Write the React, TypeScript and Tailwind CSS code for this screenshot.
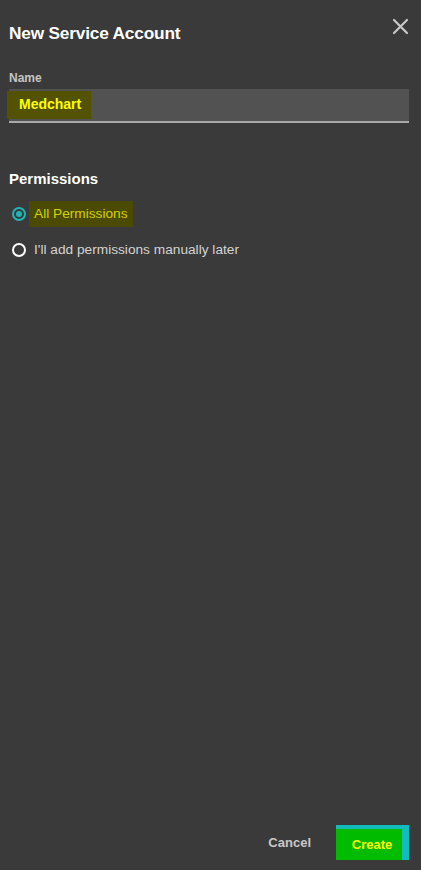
import React from 'react';

const App: React.FC = () => {
  return (
    <div className="w-[421px] h-[870px] bg-[#3a3a3a] flex flex-col font-['Liberation_Sans',Arial,sans-serif]">
      <div className="flex items-start justify-between pl-[9px] pr-[12px] pt-[21px]">
        <h1 className="text-[17.3px] font-bold text-white tracking-[-0.2px]">New Service Account</h1>
        <button className="mt-[-3px] text-[#c8c8c8]">
          <svg width="17" height="17" viewBox="0 0 17 17" fill="none" stroke="currentColor" strokeWidth="2.2" strokeLinecap="round">
            <path d="M2 2 L15 15 M15 2 L2 15" />
          </svg>
        </button>
      </div>

      <div className="pl-[9px] pr-[12px] mt-[25px]">
        <label className="block text-[12px] font-bold text-[#c4c4c4] leading-none">Name</label>
        <div className="mt-[5px] h-[34px] bg-[#525252] border-b-2 border-[#a8a8a8] flex items-center">
          <span className="ml-[-2px] h-[28px] pl-[12px] pr-[10px] flex items-center bg-[#525200] text-[#ffff00] text-[14px] font-bold">Medchart</span>
        </div>
      </div>

      <div className="px-[9px] mt-[48px]">
        <h2 className="text-[15px] font-bold text-white leading-none">Permissions</h2>
        <div className="mt-[15px] flex items-center gap-[3px]">
          <span className="w-[14px] h-[14px] ml-[3px] rounded-full border-2 border-[#1fb5b5] flex items-center justify-center">
            <span className="w-[6px] h-[6px] rounded-full bg-[#1fb5b5]" />
          </span>
          <span className="h-[26px] px-[5px] flex items-center bg-[#4a4a00] text-[#d2d200] text-[13.7px]">All Permissions</span>
        </div>
        <div className="mt-[13px] flex items-center gap-[8px]">
          <span className="w-[14px] h-[14px] ml-[3px] rounded-full border-2 border-white" />
          <span className="text-[13.7px] text-[#d4d4d4]">I'll add permissions manually later</span>
        </div>
      </div>

      <div className="mt-auto flex items-center justify-end pr-[12px] pb-[10px] gap-[25px]">
        <button className="text-[13px] font-bold text-[#c8c8c8]">Cancel</button>
        <div className="w-[73px] h-[35px] bg-[#12bcbc] pt-[4px] pr-[7px]">
          <div className="w-full h-full bg-[#00bb00] flex items-center justify-center">
            <span className="text-[13px] font-bold text-[#ffff00] ml-[6px]">Create</span>
          </div>
        </div>
      </div>
    </div>
  );
};

export default App;
